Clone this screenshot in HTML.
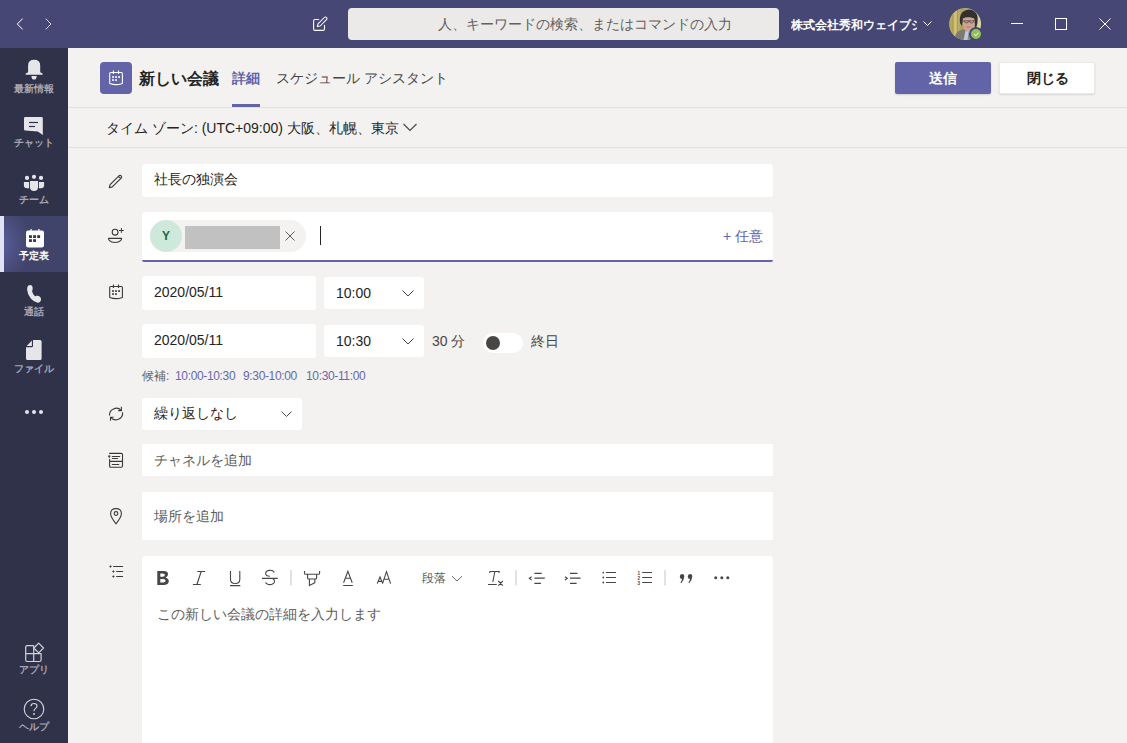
<!DOCTYPE html>
<html><head><meta charset="utf-8">
<style>
*{margin:0;padding:0;box-sizing:border-box}
html,body{width:1127px;height:743px;overflow:hidden;background:#f3f2f1;font-family:"Liberation Sans",sans-serif;color:#252423}
.a{position:absolute}
#top{left:0;top:0;width:1127px;height:48px;background:#464775}
#rail{left:0;top:48px;width:68px;height:695px;background:#30324a}
.ri{position:absolute;left:0;width:68px;height:56px}
.ri .lb{position:absolute;left:0;width:68px;text-align:center;font-size:10px;line-height:12px;color:#a7a6b3;font-weight:bold;white-space:nowrap}
.ri svg{position:absolute}
.line{position:absolute;left:68px;width:1059px;height:1px;background:#e1dfdd}
.box{position:absolute;background:#fff;border-radius:3px}
.t14{font-size:14px;line-height:20px;white-space:nowrap}
</style></head><body>

<!-- title bar -->
<div id="top" class="a">
  <svg class="a" style="left:16px;top:18px" width="8" height="12" viewBox="0 0 8 12"><path d="M6.6 0.6 L1.3 6 L6.6 11.4" fill="none" stroke="#fff" stroke-width="1"/></svg>
  <svg class="a" style="left:45px;top:18px" width="8" height="12" viewBox="0 0 8 12"><path d="M0.7 0.6 L6 6 L0.7 11.4" fill="none" stroke="#d4d4e2" stroke-width="1"/></svg>
  <svg class="a" style="left:312px;top:16px" width="16" height="16" viewBox="0 0 16 16"><path d="M6.7 3.5 H3 Q1.6 3.5 1.6 4.9 V13 Q1.6 14.4 3 14.4 H11.1 Q12.5 14.4 12.5 13 V9.2" fill="none" stroke="#fff" stroke-width="1.1" stroke-linecap="round"/><path d="M5.3 10.6 L6 7.8 L12.3 1.5 A1.55 1.55 0 0 1 14.5 3.7 L8.2 10 Z" fill="none" stroke="#fff" stroke-width="1.05" stroke-linejoin="round"/></svg>
  <div class="a" style="left:348px;top:8px;width:431px;height:32px;background:#ebeae8;border-radius:4px"></div>
  <div class="a t14" style="left:438px;top:14px;color:#616161">人、キーワードの検索、またはコマンドの入力</div>
  <div class="a" style="left:791px;top:17px;width:126px;overflow:hidden;font-size:12px;line-height:16px;color:#fff;font-weight:bold;white-space:nowrap">株式会社秀和ウェイブシ...</div>
  <svg class="a" style="left:923px;top:21px" width="9" height="6" viewBox="0 0 9 6"><path d="M0.5 0.5 L4.5 4.5 L8.5 0.5" fill="none" stroke="#fff" stroke-width="1"/></svg>
  <svg class="a" style="left:949px;top:8px" width="32" height="32" viewBox="0 0 32 32">
  <defs><clipPath id="cc"><circle cx="16" cy="16" r="16"/></clipPath>
  <linearGradient id="bgc" x1="0" x2="1" y1="0" y2="0"><stop offset="0" stop-color="#a89850"/><stop offset="0.2" stop-color="#d2c47a"/><stop offset="0.4" stop-color="#a99c5c"/><stop offset="0.7" stop-color="#c9c08e"/><stop offset="1" stop-color="#e0d8b0"/></linearGradient></defs>
  <g clip-path="url(#cc)">
    <rect width="32" height="32" fill="url(#bgc)"/>
    <path d="M4 6 V32 M8.5 2 V32" stroke="#8f8244" stroke-width="1.3" opacity=".5"/>
    <path d="M11 15 Q9.5 3 19.5 1.5 Q30 2 28.5 14 Q28 19 26 21 L25 12 Q19 8 14 11 L13 18 Z" fill="#33312f"/>
    <path d="M13.8 10.5 Q19 8 25.2 10.5 Q26.2 13 25.6 17 Q24.5 23.5 19.5 23.5 Q14.8 23 14 17 Z" fill="#cda493"/>
    <path d="M14 12.8 H25.8 M15 12.8 Q15.3 15 17.8 15 Q19.4 15 19.4 12.8 M20.4 12.8 Q20.4 15 22.4 15 Q24.8 15 25 12.8" stroke="#4d4240" stroke-width=".7" fill="none"/>
    <path d="M17.5 18.8 Q19.5 19.6 21.5 18.8" stroke="#a86f62" stroke-width=".8" fill="none"/>
    <path d="M4 32 L7.5 25 Q11 21 15.5 21.5 L18 25 L16 32 Z" fill="#7a7c74"/>
    <path d="M14.5 32 L16.5 23 Q19.5 24.5 23 22.5 L25 32 Z" fill="#c3c9dc"/>
    <path d="M18.5 32 L19.5 24.5 L21.2 24.5 L22 32 Z" fill="#858b80"/>
  </g>
</svg>
<div class="a" style="left:969px;top:27px;width:14px;height:14px;border-radius:50%;background:#92c353;border:2px solid #464775"></div>
<svg class="a" style="left:973px;top:31px" width="7" height="6" viewBox="0 0 7 6"><path d="M1.2 3.2 L2.8 4.6 L5.6 1.6" fill="none" stroke="#fff" stroke-width="1"/></svg>
<div class="a" style="left:1011px;top:23px;width:12px;height:1px;background:#fff"></div>
  <div class="a" style="left:1055px;top:18px;width:12px;height:12px;border:1px solid #fff"></div>
  <svg class="a" style="left:1099px;top:18px" width="12" height="12" viewBox="0 0 12 12"><path d="M0.5 0.5 L11.5 11.5 M11.5 0.5 L0.5 11.5" stroke="#fff" stroke-width="1"/></svg>
</div>

<!-- rail -->
<div id="rail" class="a">
  <!-- 最新情報 -->
  <div class="ri" style="top:0">
    <svg style="left:24px;top:11px" width="20" height="21" viewBox="0 0 20 21"><path d="M4.1 13.2 V6.6 Q4.1 0.7 10.15 0.7 Q16.2 0.7 16.2 6.6 V13.2 L18.5 14.5 Q19.3 15.8 18.1 15.8 H2.2 Q1 15.8 1.8 14.5 Z" fill="#e6e6ea"/><path d="M7.4 16.9 H12.7 Q12.5 20.6 10.05 20.6 Q7.6 20.6 7.4 16.9 Z" fill="#e6e6ea"/></svg>
    <div class="lb" style="top:35px">最新情報</div>
  </div>
  <!-- チャット -->
  <div class="ri" style="top:56px">
    <svg style="left:24px;top:13px" width="19" height="19" viewBox="0 0 19 19"><path d="M1.2 0 H17.5 Q18.8 0 18.8 1.3 V18 L13.8 14.4 L1.2 13.6 Q0 13.5 0 12.2 V1.2 Q0 0 1.2 0 Z" fill="#e6e6ea"/><rect x="5" y="4.9" width="9" height="1.2" fill="#30324a"/><rect x="5" y="8.9" width="6" height="1.2" fill="#30324a"/></svg>
    <div class="lb" style="top:33px">チャット</div>
  </div>
  <!-- チーム -->
  <div class="ri" style="top:112px">
    <svg style="left:23px;top:12px" width="22" height="20" viewBox="0 0 22 20"><g fill="#e6e6ea"><circle cx="4" cy="5.9" r="2.1"/><circle cx="11" cy="4.8" r="2.1"/><circle cx="18" cy="5.9" r="2.1"/><path d="M7 8.9 H15 V15 Q15 19 11 19 Q7 19 7 15 Z"/><path d="M0.9 9.9 H6.1 V16.2 H4 Q0.9 16.2 0.9 13 Z"/><path d="M15.9 9.9 H21.1 V13 Q21.1 16.2 18 16.2 H15.9 Z"/></g></svg>
    <div class="lb" style="top:34px">チーム</div>
  </div>
  <!-- 予定表 active -->
  <div class="ri" style="top:168px;background:radial-gradient(ellipse 30px 40px at 0 50%,#5a5e9c 0,rgba(70,73,115,0) 100%),#41446a">
    <div class="a" style="left:0;top:0;width:4px;height:56px;background:#e2e2f6"></div>
    <svg style="left:26px;top:13px" width="18" height="19" viewBox="0 0 18 19"><path d="M0 3.5 Q0 1.5 2 1.5 H16 Q18 1.5 18 3.5 V16 Q18 18.5 15.5 18.5 H2.5 Q0 18.5 0 16 Z" fill="#fff"/><rect x="4.5" y="0" width="1.2" height="3" fill="#fff"/><rect x="12.3" y="0" width="1.2" height="3" fill="#fff"/><rect x="3" y="6.2" width="2.9" height="2.8" fill="#34365a"/><rect x="7.1" y="6.2" width="2.9" height="2.8" fill="#34365a"/><rect x="11.2" y="6.2" width="2.9" height="2.8" fill="#34365a"/><rect x="3" y="10.2" width="2.9" height="2.8" fill="#34365a"/><rect x="7.1" y="10.2" width="2.9" height="2.8" fill="#34365a"/></svg>
    <div class="lb" style="top:34px;color:#fff">予定表</div>
  </div>
  <!-- 通話 -->
  <div class="ri" style="top:224px">
    <svg style="left:27px;top:12px" width="15" height="19" viewBox="0 0 15 19"><path d="M1.4 1.6 Q3.2 0.6 4.7 1.4 Q5.9 2.5 5.7 4.8 L5.1 7.2 Q5.4 9.6 8 12.2 L9.6 11.8 Q11.7 11.5 13.4 13.2 Q14.6 14.7 13.8 16.7 Q12.9 18.9 10.5 18.7 Q7 18.1 3.8 14.5 Q0.3 10.3 0.1 5.5 Q0 2.6 1.4 1.6 Z" fill="#e6e6ea"/></svg>
    <div class="lb" style="top:34px">通話</div>
  </div>
  <!-- ファイル -->
  <div class="ri" style="top:280px">
    <svg style="left:26px;top:12px" width="16" height="20" viewBox="0 0 16 20"><path d="M7 0 H14 Q15.6 0 15.6 1.6 V18.4 Q15.6 20 14 20 H1.6 Q0 20 0 18.4 V7.3 H5.6 Q7 7.3 7 5.9 Z" fill="#e6e6ea"/><path d="M0.7 5.9 L5.9 0.6 V5.9 Z" fill="#e6e6ea"/></svg>
    <div class="lb" style="top:35px">ファイル</div>
  </div>
  <!-- more -->
  <div class="a" style="left:25px;top:362px;width:4px;height:4px;border-radius:50%;background:#e6e6ea"></div>
  <div class="a" style="left:32px;top:362px;width:4px;height:4px;border-radius:50%;background:#e6e6ea"></div>
  <div class="a" style="left:39px;top:362px;width:4px;height:4px;border-radius:50%;background:#e6e6ea"></div>
  <!-- アプリ -->
  <svg class="a" style="left:24px;top:594px" width="22" height="21" viewBox="0 0 22 21"><path d="M9.7 3.6 H3.2 Q1.7 3.6 1.7 5.1 V18 Q1.7 19.5 3.2 19.5 H15.6 Q17.1 19.5 17.1 18 V11.6 H1.7 M9.7 3.6 V19.5" fill="none" stroke="#d2d2da" stroke-width="1.2" stroke-linejoin="round"/><path d="M14.7 1.2 L19.5 6 L14.7 10.8 L9.9 6 Z" fill="none" stroke="#d2d2da" stroke-width="1.2" stroke-linejoin="round"/></svg>
  <div class="lb a" style="left:0;top:616px;width:68px;text-align:center;font-size:10px;line-height:12px;color:#a7a6b3;font-weight:bold">アプリ</div>
  <svg class="a" style="left:23px;top:650px" width="22" height="22" viewBox="0 0 22 22"><circle cx="11" cy="11" r="9.8" fill="none" stroke="#d8d8de" stroke-width="1.1"/><path d="M8 8.3 Q8 5.5 11 5.5 Q14 5.5 14 8 Q14 9.6 12.3 10.6 Q11 11.4 11 13.2" fill="none" stroke="#d8d8de" stroke-width="1.1"/><circle cx="11" cy="16" r="0.9" fill="#d8d8de"/></svg>
  <div class="lb a" style="left:0;top:673px;width:68px;text-align:center;font-size:10px;line-height:12px;color:#a7a6b3;font-weight:bold">ヘルプ</div>
</div>

<!-- header -->
<div class="a" style="left:100px;top:62px;width:32px;height:32px;background:#6264a7;border-radius:4px"></div>
<svg class="a" style="left:108px;top:70px" width="16" height="16" viewBox="0 0 16 16"><path d="M1.7 13.4 V3.5 Q1.7 2.5 2.7 2.5 H13.4 Q14.4 2.5 14.4 3.5 V13.4 Q11 14.6 8 14.6 Q5 14.6 1.7 13.4 Z" fill="none" stroke="#fff" stroke-width="1.1" stroke-linejoin="round"/><path d="M5.4 0.6 V4 M10.5 0.6 V4" stroke="#fff" stroke-width="1.1"/><g fill="#fff"><rect x="4.1" y="6.2" width="1.8" height="1.7"/><rect x="7.1" y="6.2" width="1.8" height="1.7"/><rect x="10.2" y="6.2" width="1.8" height="1.7"/><rect x="4.1" y="9.2" width="1.8" height="1.7"/><rect x="7.1" y="9.2" width="1.8" height="1.7"/></g></svg>
<div class="a" style="left:139px;top:68px;font-size:16px;line-height:22px;font-weight:bold;white-space:nowrap;color:#252423">新しい会議</div>
<div class="a t14" style="left:232px;top:68px;color:#6264a7;font-weight:bold">詳細</div>
<div class="a" style="left:232px;top:104px;width:28px;height:3px;background:#6264a7"></div>
<div class="a t14" style="left:276px;top:68px;color:#484644">スケジュール アシスタント</div>
<div class="a" style="left:895px;top:62px;width:96px;height:32px;background:#6264a7;border-radius:2px;box-shadow:0 1px 2px rgba(0,0,0,.15)"></div>
<div class="a t14" style="left:895px;top:68px;width:96px;text-align:center;color:#fff;font-weight:bold">送信</div>
<div class="a" style="left:999px;top:62px;width:96px;height:32px;background:#fff;border:1px solid #ebe9e7;border-radius:2px;box-shadow:0 1px 2px rgba(0,0,0,.12)"></div>
<div class="a t14" style="left:1000px;top:68px;width:95px;text-align:center;color:#252423;font-weight:bold">閉じる</div>
<div class="line" style="top:107px"></div>

<!-- timezone -->
<div class="a t14" style="left:106px;top:118px;color:#252423">タイム ゾーン: (UTC+09:00) 大阪、札幌、東京</div>
<svg class="a" style="left:403px;top:123px" width="14" height="9" viewBox="0 0 14 9"><path d="M0.5 1 L7 7.5 L13.5 1" fill="none" stroke="#484644" stroke-width="1.1"/></svg>
<div class="line" style="top:147px"></div>

<!-- title -->
<svg class="a" style="left:108px;top:173px" width="16" height="16" viewBox="0 0 16 16"><path d="M1.3 14.7 L2.1 11.7 L11.2 2.6 A1.6 1.6 0 0 1 13.4 4.8 L4.3 13.9 Z M10.6 3.4 L12.6 5.4" fill="none" stroke="#3b3a39" stroke-width="1.15" stroke-linejoin="round"/></svg>
<div class="box" style="left:142px;top:164px;width:631px;height:33px"></div>
<div class="a t14" style="left:154px;top:169px;color:#252423">社長の独演会</div>

<!-- attendees -->
<svg class="a" style="left:107px;top:227px" width="18" height="17" viewBox="0 0 18 17"><circle cx="8.1" cy="5.2" r="2.9" fill="none" stroke="#3b3a39" stroke-width="1.1"/><path d="M1.5 11.4 H14.6 Q14.6 12.6 13.6 13.6 Q11.8 15.5 8 15.5 Q4.2 15.5 2.5 13.6 Q1.5 12.6 1.5 11.4 Z" fill="none" stroke="#3b3a39" stroke-width="1.1" stroke-linejoin="round"/><path d="M14.4 1 V5.9 M12 3.5 H16.8" stroke="#3b3a39" stroke-width="1"/></svg>
<div class="box" style="left:142px;top:212px;width:631px;height:50px;border-bottom:2px solid #6264a7;border-radius:3px 3px 2px 2px"></div>
<div class="a" style="left:150px;top:220px;width:156px;height:32px;border-radius:16px;background:#f3f2f1"></div>
<div class="a" style="left:150px;top:220px;width:32px;height:32px;border-radius:50%;background:#cfe8dc;color:#1d6a3e;font-size:12px;font-weight:bold;line-height:33px;text-align:center">Y</div>
<div class="a" style="left:185px;top:226px;width:95px;height:23px;background:#c1c1c1"></div>
<svg class="a" style="left:285px;top:231px" width="10" height="10" viewBox="0 0 10 10"><path d="M0.5 0.5 L9.5 9.5 M9.5 0.5 L0.5 9.5" stroke="#605e5c" stroke-width="1"/></svg>
<div class="a" style="left:320px;top:226px;width:1px;height:19px;background:#252423"></div>
<div class="a t14" style="left:623px;top:226px;width:140px;text-align:right;color:#6264a7">+ 任意</div>

<!-- dates -->
<svg class="a" style="left:108px;top:284px" width="16" height="16" viewBox="0 0 16 16"><path d="M1.7 13.4 V3.5 Q1.7 2.5 2.7 2.5 H13.4 Q14.4 2.5 14.4 3.5 V13.4 Q11 14.6 8 14.6 Q5 14.6 1.7 13.4 Z" fill="none" stroke="#3b3a39" stroke-width="1.1" stroke-linejoin="round"/><path d="M5.4 0.6 V4 M10.5 0.6 V4" stroke="#3b3a39" stroke-width="1.1"/><g fill="#3b3a39"><rect x="4.1" y="6.2" width="1.8" height="1.7"/><rect x="7.1" y="6.2" width="1.8" height="1.7"/><rect x="10.2" y="6.2" width="1.8" height="1.7"/><rect x="4.1" y="9.2" width="1.8" height="1.7"/><rect x="7.1" y="9.2" width="1.8" height="1.7"/></g></svg>
<div class="box" style="left:142px;top:276px;width:174px;height:34px"></div>
<div class="a t14" style="left:154px;top:282px;color:#252423">2020/05/11</div>
<div class="box" style="left:324px;top:277px;width:100px;height:32px"></div>
<div class="a t14" style="left:336px;top:283px;color:#252423">10:00</div>
<svg class="a" style="left:402px;top:290px" width="12" height="7" viewBox="0 0 12 7"><path d="M0.5 0.5 L6 6 L11.5 0.5" fill="none" stroke="#484644" stroke-width="1"/></svg>

<div class="box" style="left:142px;top:324px;width:174px;height:34px"></div>
<div class="a t14" style="left:154px;top:330px;color:#252423">2020/05/11</div>
<div class="box" style="left:324px;top:325px;width:100px;height:32px"></div>
<div class="a t14" style="left:336px;top:331px;color:#252423">10:30</div>
<svg class="a" style="left:402px;top:338px" width="12" height="7" viewBox="0 0 12 7"><path d="M0.5 0.5 L6 6 L11.5 0.5" fill="none" stroke="#484644" stroke-width="1"/></svg>
<div class="a t14" style="left:432px;top:331px;color:#484644">30 分</div>
<div class="a" style="left:483px;top:333px;width:40px;height:20px;border-radius:10px;background:#fff"></div>
<div class="a" style="left:486px;top:336px;width:14px;height:14px;border-radius:50%;background:#484644"></div>
<div class="a t14" style="left:531px;top:331px;color:#484644">終日</div>

<div class="a" style="left:142px;top:368px;font-size:12px;line-height:16px;white-space:nowrap;color:#605e5c">候補:</div>
<div class="a" style="left:175px;top:368px;font-size:12px;line-height:16px;white-space:nowrap;letter-spacing:-0.35px;color:#6668aa">10:00-10:30</div>
<div class="a" style="left:243px;top:368px;font-size:12px;line-height:16px;white-space:nowrap;letter-spacing:-0.35px;color:#6668aa">9:30-10:00</div>
<div class="a" style="left:306px;top:368px;font-size:12px;line-height:16px;white-space:nowrap;letter-spacing:-0.35px;color:#6668aa">10:30-11:00</div>

<!-- repeat -->
<svg class="a" style="left:108px;top:406px" width="16" height="16" viewBox="0 0 16 16"><path d="M1.5 9.6 A6.8 6.8 0 0 1 13.2 4.4 M14.6 6.2 A6.8 6.8 0 0 1 2.7 11.4 M13.4 0.8 V4.6 H10.2 M2.5 14.8 V11.2 H5.7" fill="none" stroke="#3b3a39" stroke-width="1.1"/></svg>
<div class="box" style="left:142px;top:398px;width:160px;height:32px"></div>
<div class="a t14" style="left:154px;top:403px;color:#252423">繰り返しなし</div>
<svg class="a" style="left:281px;top:411px" width="11" height="7" viewBox="0 0 11 7"><path d="M0.5 0.5 L5.5 5.5 L10.5 0.5" fill="none" stroke="#484644" stroke-width="1"/></svg>

<!-- channel -->
<svg class="a" style="left:108px;top:452px" width="16" height="17" viewBox="0 0 16 17"><path d="M1.6 1.4 H13.3 Q14.5 1.4 14.5 2.6 V14.1 Q14.5 15.3 13.3 15.3 H2.8 Q1.6 15.3 1.6 14.1 V7.2 M1.6 9.4 H14.5 M4.3 4.5 H11.7 M4.3 6.5 H9.6 M4.3 12.5 H10.8" fill="none" stroke="#3b3a39" stroke-width="1.1" stroke-linecap="round"/><circle cx="1.3" cy="4.5" r="1.15" fill="#3b3a39"/></svg>
<div class="box" style="left:142px;top:444px;width:631px;height:32px;border-radius:2px"></div>
<div class="a t14" style="left:154px;top:450px;color:#605e5c">チャネルを追加</div>

<!-- location -->
<svg class="a" style="left:109px;top:507px" width="14" height="18" viewBox="0 0 14 18"><path d="M7 16.8 Q1.6 10.2 1.6 6.6 Q1.6 1.6 7 1.6 Q12.4 1.6 12.4 6.6 Q12.4 10.2 7 16.8 Z" fill="none" stroke="#3b3a39" stroke-width="1.1" stroke-linejoin="round"/><circle cx="7" cy="6.5" r="1.9" fill="none" stroke="#3b3a39" stroke-width="1.1"/></svg>
<div class="box" style="left:142px;top:492px;width:631px;height:48px;border-radius:2px"></div>
<div class="a t14" style="left:154px;top:506px;color:#605e5c">場所を追加</div>

<!-- details -->
<svg class="a" style="left:109px;top:564px" width="15" height="15" viewBox="0 0 15 15"><path d="M4.6 2.5 H13.6 M7.6 7.5 H13.6 M7.6 12.5 H13.6" stroke="#3b3a39" stroke-width="1.1" stroke-linecap="round"/><g fill="#3b3a39"><path d="M1.5 1.2 L2.8 2.5 L1.5 3.8 L0.2 2.5 Z"/><path d="M4.4 6.2 L5.7 7.5 L4.4 8.8 L3.1 7.5 Z"/><path d="M4.4 11.2 L5.7 12.5 L4.4 13.8 L3.1 12.5 Z"/></g></svg>
<div class="box" style="left:142px;top:556px;width:631px;height:200px"></div>
<svg class="a" style="left:150px;top:562px" width="590" height="30" viewBox="150 562 590 30">
<g fill="none" stroke="#484644" stroke-width="1.1">
<!-- I -->
<path d="M197.3 571.5 H205.2 M192.9 584.5 H200.8 M201.2 571.5 L196.9 584.5"/>
<!-- U -->
<path d="M230.5 571 V579.5 Q230.5 583.5 235.2 583.5 Q239.8 583.5 239.8 579.5 V571 M230 585.6 H240.3"/>
<!-- S -->
<path d="M274.3 572.4 A4.4 3 0 1 0 269.8 576.3 M273 578.7 A4.7 3.4 0 1 1 265.5 582.5 M262 578.4 H277.8"/>
<!-- highlighter -->
<path d="M304.5 571 V573.2 Q304.5 574.3 305.6 574.3 H318.5 Q319.6 574.3 319.6 573.2 V571 M307.6 574.3 V578 Q307.6 579 308.6 579 H315.6 Q316.6 579 316.6 578 V574.3 M309.4 579 V585.6 L314.8 582.8 V579" stroke-linejoin="round"/>
<!-- A -->
<path d="M343.6 582.8 L347.9 571.3 L352.2 582.8 M345.4 578.3 H350.4 M343.2 585.5 H352.8"/>
<!-- AA -->
<path d="M377.2 583.6 L380 577 L382.8 583.6 M378.3 581.4 H381.7 M382.5 583.6 L386.5 571.6 L390.6 583.6 M384 579.3 H389.1"/>
<!-- chevron 段落 -->
<path d="M452 576.2 L457 581 L462 576.2" stroke="#605e5c" stroke-width="0.9"/>
<!-- Tx -->
<path d="M489.6 573 L490 571.5 H499.2 L498.9 573 M494.9 571.5 L492.8 582 M488 584.5 H496.8 M498.3 581 L502.8 585.6 M502.8 581 L498.3 585.6"/>
<!-- outdent -->
<path d="M531.6 576.7 L529.3 578.3 L531.6 580 M534.4 573.4 H541.7 M534.4 578.1 H544.8 M534.4 583.4 H540.9"/>
<!-- indent -->
<path d="M565 576.7 L567.3 578.3 L565 580 M570 573.4 H577.5 M570 578.1 H580.6 M570 583.4 H576.6"/>
<!-- bullets -->
<path d="M606 572.5 H616 M606 577.5 H616 M606 582.5 H616" stroke-width="1"/>
<!-- numbered -->
<path d="M642.2 572.5 H652 M642.2 577.5 H652 M642.2 582.5 H652" stroke-width="1"/>
</g>
<g fill="#484644">
<circle cx="603.3" cy="572.6" r="0.9"/><circle cx="603.3" cy="577.5" r="0.9"/><circle cx="603.3" cy="582.5" r="0.9"/>
<circle cx="715.7" cy="577.8" r="1.5"/><circle cx="721.8" cy="577.8" r="1.5"/><circle cx="727.8" cy="577.8" r="1.5"/>
<path d="M157.3 571 H163.5 Q168 571 168 574.3 Q168 576.8 165.6 577.7 Q168.8 578.5 168.8 581.3 Q168.8 585 163.5 585 H157.3 Z M160.3 573.4 V576.7 H162.8 Q164.9 576.7 164.9 575 Q164.9 573.4 162.8 573.4 Z M160.3 579 V582.6 H163.2 Q165.6 582.6 165.6 580.8 Q165.6 579 163.2 579 Z" fill-rule="evenodd"/>
<path d="M682 573.9 Q684.3 573.9 684.3 576.5 Q684.3 579.5 681.2 583.2 L680.4 582.7 Q681.8 580.5 682 579 Q679.8 579 679.8 576.5 Q679.8 573.9 682 573.9 Z"/>
<path d="M690 573.9 Q692.3 573.9 692.3 576.5 Q692.3 579.5 689.2 583.2 L688.4 582.7 Q689.8 580.5 690 579 Q687.8 579 687.8 576.5 Q687.8 573.9 690 573.9 Z"/>
<text x="637.6" y="575" font-size="4.6" font-family="Liberation Sans" font-weight="bold">1</text>
<text x="637.6" y="580" font-size="4.6" font-family="Liberation Sans" font-weight="bold">2</text>
<text x="637.6" y="585" font-size="4.6" font-family="Liberation Sans" font-weight="bold">3</text>
</g>
<g fill="#c8c6c4"><rect x="290.5" y="570" width="1" height="15.5"/><rect x="515.5" y="570" width="1" height="15.5"/><rect x="664.5" y="570" width="1" height="15.5"/></g>
</svg>
<div class="a" style="left:422px;top:570px;font-size:12px;line-height:16px;color:#605e5c;white-space:nowrap">段落</div>
<div class="a t14" style="left:157px;top:604px;color:#605e5c">この新しい会議の詳細を入力します</div>

</body></html>
